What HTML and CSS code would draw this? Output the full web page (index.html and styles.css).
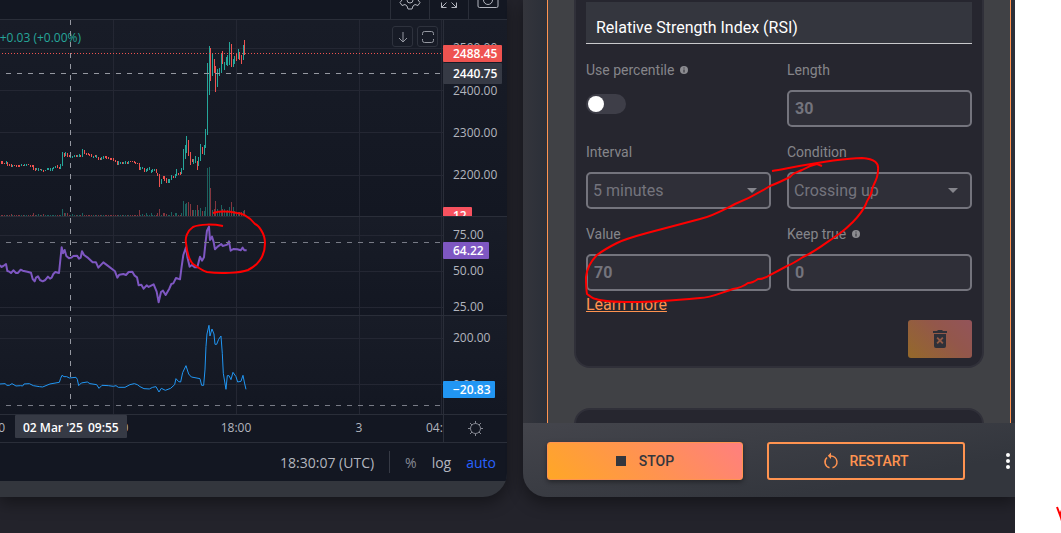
FILE: index.html
```html
<!DOCTYPE html>
<html lang="en">
<head>
    <meta charset="UTF-8">
    <title>Trading Bot</title>
    <link rel="stylesheet" href="styles.css">
</head>
<body>
    <div class="app">
        <section class="chart-panel">
            <div class="chart-toolbar">
                <button class="tool-btn" aria-label="Chart settings">
                    <svg width="28" height="28" viewBox="-14 -14 28 28"><path d="M-2-10h4l1 3 2 1 3-1.500 2 3-2 2.500v2l2 2.500-2 3-3-1-2 1.500-1 3h-4l-1-3-2-1.500-3 1-2-3 2-2.500v-2l-2-2.500 2-3 3 1.500 2-1z"/><circle r="3"/></svg>
                </button>
                <button class="tool-btn" aria-label="Full screen">
                    <svg width="28" height="28" viewBox="-14 -14 28 28"><path d="M-7.500 2.500v5h5M-7.500 7.500l5-5M7.500 2.500v5h-5M7.500 7.500l-5-5M-7.500-2.500v-5h5M7.500-2.500v-5h-5"/></svg>
                </button>
                <button class="tool-btn" aria-label="Take a snapshot">
                    <svg width="28" height="28" viewBox="-14 -14 28 28"><path d="M-10-5q0-2 2-2h3l2-2h6l2 2h3q2 0 2 2v11q0 1.500-1.500 1.500h-17q-1.500 0-1.500-1.500z"/><circle r="4.500"/></svg>
                </button>
            </div>

            <div class="chart-area">
                <svg class="chart" viewBox="0 20 507 423">
                    <defs>
                        <linearGradient id="pane" x1="0" y1="0" x2="0" y2="1">
                            <stop offset="0" stop-color="#181c27"/>
                            <stop offset="1" stop-color="#131722"/>
                        </linearGradient>
                        <clipPath id="plot"><rect x="0" y="20" width="443" height="422"/></clipPath>
                        <clipPath id="price-pane"><rect x="0" y="20" width="507" height="196"/></clipPath>
                    </defs>
                    <rect fill="url(#pane)" x="0" y="20" width="507" height="196"/>
                    <rect fill="url(#pane)" x="0" y="217" width="507" height="98"/>
                    <rect fill="url(#pane)" x="0" y="316" width="507" height="98"/>

                    <path class="grid" d="M0 48.500H443M0 90.500H443M0 132.500H443M0 175.500H443M0 235.500H443M0 271.500H443M0 307.500H443M0 338.500H443M0 384.500H443M113.500 20V414M236.500 20V414M359.500 20V414M441.500 20V414"/>

                    <text class="legend" x="81" y="42" text-anchor="end">+0.03 (+0.00%)</text>

                    <path id="vol-up" class="vol-up"/>
                    <path id="vol-down" class="vol-down"/>
                    <path id="candle-up" class="candle-up"/>
                    <path id="candle-down" class="candle-down"/>

                    <!-- rsi -->
                    <polyline class="rsi" transform="translate(0 210) scale(.3333)" points="0,165 4,171 10,168 18,162 22,183 28,185 33,189 40,181 48,189 54,189 62,179 68,182 82,185 93,188 98,207 104,214 108,203 114,199 120,210 128,214 136,210 144,200 150,206 155,203 160,192 166,186 177,189 181,150 185,112 189,130 194,120 199,138 207,145 214,143 220,138 231,137 237,146 242,143 246,124 252,135 262,142 278,157 288,157 295,173 310,157 322,166 345,184 352,203 358,194 370,192 378,195 386,186 397,185 404,197 411,202 416,226 424,224 431,236 440,226 446,231 461,223 470,245 476,277 483,246 489,242 497,255 508,236 514,222 520,220 528,204 540,208 545,170 550,135 558,112 562,140 569,170 576,165 584,172 592,172 600,140 606,152 612,142 617,95 621,62 627,50 630,90 636,80 641,96 645,118 653,110 664,102 668,108 682,104 687,94 692,122 700,117 712,118 722,121 728,113 733,121 740,121"/>
                    <!-- cci -->
                    <polyline class="cci" transform="translate(0 210) scale(.3333)" points="0,522 16,521 20,526 28,526 36,521 48,528 62,527 68,528 72,522 88,521 100,527 118,530 128,531 150,522 178,517 182,505 186,496 192,500 200,500 208,504 228,502 232,508 236,527 244,519 262,516 270,521 290,524 297,535 306,526 325,527 340,529 348,527 355,532 375,532 390,524 403,521 412,524 420,530 432,536 448,537 458,532 468,530 477,546 484,535 496,541 512,535 524,524 528,506 536,515 542,516 548,488 558,467 566,492 574,501 600,506 605,526 611,526 615,480 618,410 621,372 627,346 630,378 636,357 642,372 645,403 650,403 656,388 663,378 667,430 670,490 678,538 682,497 687,497 693,509 699,487 708,500 713,516 723,514 729,496 733,516 738,538"/>

                    <path class="price-line" d="M2 53.500H443"/>
                    <path class="crosshair" d="M6 73.500H441M70.500 20V409"/>
                    <path class="crosshair level" d="M6 242.500H441M6 405.500H441"/>

                    <path class="divider" d="M0 216.500H507M0 315.500H507M0 414.500H507M0 442.500H507M443.500 20V442"/>

                    <!-- price scale -->
                    <g class="scale">
                        <text x="453" y="52">2500.00</text>
                        <text x="453" y="95">2400.00</text>
                        <text x="453" y="137">2300.00</text>
                        <text x="453" y="179">2200.00</text>
                        <text x="453" y="239">75.00</text>
                        <text x="453" y="275">50.00</text>
                        <text x="453" y="311">25.00</text>
                        <text x="453" y="342">200.00</text>
                        <text x="453" y="389">0.00</text>
                    </g>
                    <g class="tags">
                        <rect fill="#ef5350" x="443" y="45" width="59" height="17" rx="1"/>
                        <text x="453" y="58">2488.45</text>
                        <rect fill="#363a45" x="443" y="63" width="59" height="21" rx="1"/>
                        <text x="453" y="78">2440.75</text>
                        <g clip-path="url(#price-pane)">
                            <rect fill="#f7525f" x="443" y="207" width="29" height="17" rx="1"/>
                            <text x="453" y="220">12</text>
                        </g>
                        <rect fill="#7e57c2" x="443" y="242" width="46" height="17" rx="1"/>
                        <text x="453" y="255">64.22</text>
                        <rect fill="#2196f3" x="443" y="381" width="52" height="17" rx="1"/>
                        <text x="453" y="394">−20.83</text>
                    </g>

                    <!-- time scale -->
                    <g class="scale" clip-path="url(#plot)">
                        <text x="5" y="432" text-anchor="end">12:00</text>
                        <text x="113" y="432" text-anchor="middle">06:00</text>
                        <text x="236" y="432" text-anchor="middle">18:00</text>
                        <text x="359" y="432" text-anchor="middle">3</text>
                        <text x="426" y="432">04:00</text>
                    </g>
                    <g class="tags">
                        <rect fill="#363a45" x="15" y="415" width="112" height="23" rx="1"/>
                        <text x="23" y="432">02 Mar '25</text>
                        <text x="88" y="432">09:55</text>
                    </g>
                    <g class="sun" transform="translate(475.500 428.500)">
                        <circle r="5"/>
                        <path d="M0-5v-2.500M0 5v2.500M-5 0h-2.500M5 0h2.500M-3.500-3.500l-2-2M3.500-3.500l2-2M-3.500 3.500l-2 2M3.500 3.500l2 2"/>
                    </g>
                </svg>
                <div class="pane-buttons">
                    <button class="pane-btn" aria-label="Move pane down">
                        <svg width="18" height="18" viewBox="0 0 18 18"><path d="M9 4v10M5 10l4 4 4-4"/></svg>
                    </button>
                    <button class="pane-btn" aria-label="Maximize pane">
                        <svg width="18" height="18" viewBox="0 0 18 18"><path d="M3.500 7V5.500q0-2 2-2H7M11 3.500h1.500q2 0 2 2V7M14.500 11v1.500q0 2-2 2H11M7 14.500H5.500q-2 0-2-2V11M7 3.500h4M7 14.500h4"/></svg>
                    </button>
                </div>
            </div>

            <div class="chart-footer">
                <button class="clock">18:30:07 (UTC)</button>
                <span class="separator"></span>
                <button class="percent">%</button>
                <button>log</button>
                <button class="active">auto</button>
            </div>
        </section>

        <section class="bot-panel">
            <div class="settings">
                <div class="scroll-area">
                    <form class="card">
                        <div class="card-title">Relative Strength Index (RSI)</div>
                        <div class="fields">
                            <div class="field">
                                <label for="percentile">Use percentile
                                    <svg class="info" width="10" height="10" viewBox="0 0 10 10"><circle cx="5" cy="5" r="4"/><path d="M5 2.500v1M5 4.500v3"/></svg>
                                </label>
                                <input class="switch" type="checkbox" id="percentile">
                            </div>
                            <div class="field">
                                <label for="length">Length</label>
                                <input class="box" type="text" id="length" value="30">
                            </div>
                            <div class="field">
                                <label for="interval">Interval</label>
                                <select class="box" id="interval"><option>5 minutes</option></select>
                            </div>
                            <div class="field">
                                <label for="condition">Condition</label>
                                <select class="box" id="condition"><option>Crossing up</option></select>
                            </div>
                            <div class="field">
                                <label for="value">Value</label>
                                <input class="box" type="text" id="value" value="70">
                            </div>
                            <div class="field">
                                <label for="keep">Keep true
                                    <svg class="info" width="10" height="10" viewBox="0 0 10 10"><circle cx="5" cy="5" r="4"/><path d="M5 2.500v1M5 4.500v3"/></svg>
                                </label>
                                <input class="box" type="text" id="keep" value="0">
                            </div>
                        </div>
                        <a class="learn-more" href="#">Learn more</a>
                        <button class="delete-btn" type="button" aria-label="Delete">
                            <svg width="16" height="20" viewBox="0 0 16 20"><path fill-rule="evenodd" d="M1 2h4l1-1h4l1 1h4v2H1zM2 5h12v12q0 2-2 2H4q-2 0-2-2zM5.800 8L4.500 9.300 6.700 11.500 4.500 13.700 5.800 15 8 12.800 10.200 15l1.300-1.300L9.300 11.500l2.200-2.200L10.200 8 8 10.200z"/></svg>
                        </button>
                    </form>
                    <div class="card next"></div>
                </div>
            </div>
            <div class="actions">
                <button class="stop-btn"><span class="square"></span>STOP</button>
                <button class="restart-btn">
                    <svg width="16" height="18" viewBox="0 0 16 18"><path d="M4 5.500A6 6 0 0 0 6.500 15.800M9.500 15.800A6 6 0 0 0 8 4"/><path class="head" d="M8 .5v6.500L4.800 3.800z"/></svg>
                    RESTART
                </button>
                <button class="more-btn" aria-label="More">
                    <svg width="6" height="16" viewBox="0 0 6 16"><circle cx="3" cy="2" r="2"/><circle cx="3" cy="8" r="2"/><circle cx="3" cy="14" r="2"/></svg>
                </button>
            </div>
        </section>
    </div>

    <!-- red pen marks -->
    <svg class="marks" width="1061" height="533" viewBox="0 0 1061 533">
        <path d="M223 226C213 224 200 224 193 227C187 231 185 238 186 243C187 253 189 260 193 264C200 269 203 271 207 272C220 274 240 273 248 270C258 265 265 257 265 243C265 233 258 225 255 224C248 215 240 213 237 213C227 211 220 211 213 213"/>
        <path d="M772 171C800 166 838 158 862 158C875 159 879 163 878 170C878 181 872 185 872 190C871 197 867 199 866 204C860 217 846 229 839 234C827 242 815 252 803 257C797 261 792 264 787 266L770 275C766 278 762 279 758 279C754 282 750 283 748 283C744 286 739 288 733 289C718 294 710 298 700 298C678 300 656 302 633 302C617 302 604 302 596 299C593 299 590 296 587 294C586 288 586 283 586 277C587 267 591 261 597 255C605 249 611 246 617 243C625 239 636 236 647 233L700 219C713 216 725 209 735 204C750 198 762 191 770 186C778 183 784 180 790 177C794 172 798 172 802 170C807 167 812 165 817 164L822 166"/>
        <path d="M1057 507L1060 515L1062 510M1060 514L1062 521"/>
    </svg>

    <script>
        // [x, high, low]
        const up = [
            [6,161,164],[12,165,167],[21,164,166],[24,164,166],[26,164,166],[36,168,170],[38,168,171],[41,169,171],
            [45,170,171],[47,168,170],[48,168,170],[50,168,171],[52,168,171],[53,167,169],[55,166,168],[60,164,169],
            [62,152,166],[65,152,156],[70,156,158],[72,156,158],[74,155,157],[77,155,157],[79,154,157],[82,149,157],
            [93,156,158],[96,155,158],[101,157,160],[103,156,159],[118,161,165],[120,162,164],[123,162,164],[125,161,164],
            [128,161,164],[140,167,170],[142,167,169],[146,169,172],[147,168,171],[149,167,170],[151,170,173],[152,169,172],
            [154,169,171],[161,179,184],[168,179,183],[169,179,183],[171,175,180],[175,174,178],[176,169,176],[181,168,174],
            [183,149,170],[185,145,159],[186,136,153],[193,159,164],[195,156,163],[198,157,166],[200,144,161],[204,145,155],
            [205,129,148],[207,63,135],[209,46,95],[212,53,76],[217,69,87],[219,68,76],[221,53,73],[224,62,70],
            [226,57,65],[227,55,66],[229,42,65],[233,59,67],[234,56,64],[238,49,59],[243,45,60]
        ];
        const down = [
            [1,161,164],[2,161,164],[4,163,164],[7,162,166],[9,164,166],[11,164,167],[14,165,166],[16,165,167],
            [18,165,167],[19,165,167],[23,165,166],[28,164,165],[30,165,167],[32,165,167],[33,165,170],[35,168,171],
            [40,169,170],[43,170,172],[57,165,168],[59,167,169],[64,153,157],[67,153,157],[69,155,157],[76,155,157],
            [80,155,157],[84,150,154],[86,153,155],[88,153,155],[89,154,156],[91,154,157],[95,155,157],[98,157,160],
            [100,158,160],[105,156,158],[106,156,159],[108,157,159],[110,158,160],[111,158,160],[113,158,161],[115,160,162],
            [117,161,165],[122,162,164],[127,162,164],[130,161,162],[132,161,162],[134,161,163],[135,162,164],[137,163,164],
            [139,163,170],[144,168,172],[156,169,173],[157,173,176],[159,174,187],[163,176,179],[164,176,181],[166,178,183],
            [173,176,178],[178,173,175],[180,172,175],[188,140,156],[190,152,165],[192,159,162],[197,161,170],[202,147,154],
            [210,48,81],[214,59,73],[215,66,92],[222,51,64],[231,44,67],[236,53,61],[239,52,60],[241,55,64],[244,40,55]
        ];
        const volume = {
            11: 2, 33: 3, 38: 2, 43: 2, 62: 7, 64: 3, 65: 3, 67: 3, 72: 2, 82: 3, 139: 6, 142: 2, 146: 3, 151: 3, 157: 3,
            159: 7, 163: 3, 164: 3, 166: 2, 171: 4, 175: 3, 176: 3, 181: 3, 183: 15, 185: 12, 186: 13, 188: 14, 190: 12,
            192: 6, 193: 6, 195: 6, 197: 11, 198: 6, 200: 8, 202: 5, 204: 5, 205: 9, 207: 48, 209: 49, 210: 28, 212: 6,
            214: 7, 215: 15, 217: 7, 219: 5, 221: 11, 222: 7, 224: 7, 226: 5, 227: 6, 229: 9, 231: 14, 233: 9, 234: 5,
            236: 4, 238: 4, 239: 4, 241: 4, 243: 5, 244: 6
        };

        function draw(name, candles) {
            const bars = candles.map(([x, high, low]) => `M${x + 0.5} ${high}V${low}`);
            const volumes = candles.map(([x]) => `M${x + 0.5} 216v-${volume[x] || 1}`);
            document.getElementById('candle-' + name).setAttribute('d', bars.join(''));
            document.getElementById('vol-' + name).setAttribute('d', volumes.join(''));
        }

        draw('up', up);
        draw('down', down);
    </script>
</body>
</html>
```
FILE: styles.css
```css
* {
    box-sizing: border-box;
}
body {
    margin: 0;
    padding-right: 46px;
    background: #fff;
    font-family: Roboto, sans-serif;
    overflow: hidden;
}
button {
    padding: 0;
    border: none;
    background: none;
    font: inherit;
    color: inherit;
    cursor: pointer;
}
.app {
    display: flex;
    gap: 16px;
    align-items: flex-start;
    min-height: 100vh;
    padding-bottom: 36px;
    background: #23232b;
    overflow: hidden;
}

/* Chart */
.chart-panel {
    flex: 1;
    padding-bottom: 16px;
    background: #33363d;
    border-radius: 0 0 24px 0;
    box-shadow: 0 6px 16px rgba(0, 0, 0, 0.4);
    font-family: 'Trebuchet MS', 'Open Sans', sans-serif;
    overflow: hidden;
}
.chart-toolbar {
    display: flex;
    justify-content: flex-end;
    align-items: flex-end;
    height: 20px;
    background: #131722;
    border-bottom: 1px solid #2a2e39;
    overflow: hidden;
}
.tool-btn {
    display: flex;
    justify-content: center;
    align-items: center;
    width: 39px;
    height: 38px;
    border-left: 1px solid #2a2e39;
}
.tool-btn svg,
.pane-btn svg {
    fill: none;
    stroke: #b2b5be;
}
.chart-area {
    position: relative;
}
.chart {
    display: block;
    width: 100%;
    background: #131722;
    font-size: 12px;
}
.grid {
    stroke: #242733;
}
.divider {
    stroke: #2a2e39;
}
.legend {
    fill: #26a69a;
}
.candle-up {
    stroke: #26a69a;
}
.candle-down {
    stroke: #ef5350;
}
.vol-up {
    stroke: #1c625f;
}
.vol-down {
    stroke: #83363f;
}
.rsi,
.cci {
    fill: none;
    stroke: #7e57c2;
    stroke-width: 2px;
    stroke-linejoin: round;
    vector-effect: non-scaling-stroke;
}
.cci {
    stroke: #2196f3;
    stroke-width: 1px;
}
.price-line {
    stroke: #ef5350;
    stroke-dasharray: 1 2;
}
.crosshair {
    stroke: #9598a1;
    stroke-dasharray: 5 6;
}
.crosshair.level {
    stroke: #787b86;
}
.scale {
    fill: #b2b5be;
}
.tags {
    fill: #fff;
    font-weight: 600;
}
.sun {
    fill: none;
    stroke: #868993;
}
.pane-buttons {
    position: absolute;
    top: 6px;
    right: 69px;
    display: flex;
    gap: 4px;
}
.pane-btn {
    display: flex;
    justify-content: center;
    align-items: center;
    width: 21px;
    height: 21px;
    border: 1px solid #2e323d;
    border-radius: 3px;
    background: #171b26;
}
.pane-btn svg {
    stroke: #9598a1;
}
.chart-footer {
    display: flex;
    justify-content: flex-end;
    align-items: center;
    gap: 15px;
    height: 38px;
    padding-right: 11px;
    background: #131722;
    color: #b2b5be;
    font-size: 14px;
}
.separator {
    width: 1px;
    height: 22px;
    background: #363a45;
}
.percent {
    color: #868993;
}
.active {
    color: #2962ff;
}

/* Bot settings */
.bot-panel {
    width: 492px;
    border-radius: 0 0 0 24px;
    box-shadow: 0 6px 16px rgba(0, 0, 0, 0.4);
    overflow: hidden;
}
.settings {
    height: 423px;
    padding: 0 4px 0 24px;
    background: linear-gradient(to right, #34353c, #2b2f38 24px);
    overflow: hidden;
}
.scroll-area {
    padding: 0 26px;
    border: solid #ff9350;
    border-width: 0 1px;
    background: #404145;
}
.card {
    display: flex;
    flex-direction: column;
    padding: 2px 10px 8px;
    border: 2px solid #303039;
    border-top: none;
    border-radius: 0 0 16px 16px;
    background: #26262f;
}
.card.next {
    height: 60px;
    margin-top: 40px;
    border-top: 2px solid #303039;
    border-radius: 16px 16px 0 0;
}
.card-title {
    height: 42px;
    padding: 5px 10px 0;
    border-bottom: 1px solid #c9c9cc;
    background: #34363e;
    color: #fff;
    font-size: 16px;
    line-height: 42px;
}
.fields {
    display: grid;
    grid-template-columns: 1fr 1fr;
    gap: 15px 16px;
    padding: 16px 0 2px;
}
.field {
    display: flex;
    flex-direction: column;
    gap: 10px;
}
.field label {
    display: flex;
    align-items: center;
    gap: 5px;
    color: #85858a;
    font-size: 14px;
    line-height: 20px;
}
.info circle {
    fill: #8c8c91;
}
.info path {
    stroke: #26262f;
}
.box {
    width: 100%;
    height: 37px;
    padding: 0 6px;
    border: 2px solid #74747d;
    border-radius: 5px;
    background: #2f2f38;
    color: #74747d;
    font-family: inherit;
    font-size: 16px;
    font-weight: bold;
}
select.box {
    appearance: none;
    padding: 0 5px;
    background: #2f2f38 url("data:image/svg+xml,%3Csvg xmlns='http://www.w3.org/2000/svg' width='10' height='5'%3E%3Cpath d='M0 0h10L5 5z' fill='%2385858c'/%3E%3C/svg%3E") no-repeat right 12px center;
    font-weight: normal;
}
.switch {
    appearance: none;
    display: flex;
    align-items: center;
    width: 40px;
    height: 20px;
    margin: 4px 0;
    padding: 2px;
    border-radius: 10px;
    background: #3e3e48;
}
.switch::before {
    content: '';
    width: 16px;
    height: 16px;
    border-radius: 50%;
    background: #fff;
}
.switch:checked {
    justify-content: flex-end;
}
.learn-more {
    align-self: flex-start;
    color: #ff9350;
    font-size: 16px;
    line-height: 24px;
}
.delete-btn {
    display: flex;
    justify-content: center;
    align-items: center;
    align-self: flex-end;
    width: 64px;
    height: 38px;
    margin-top: 3px;
    border-radius: 3px;
    background: linear-gradient(45deg, #94692a, #93574b 60%, #93545a);
}
.delete-btn svg {
    fill: #2f3038;
}

/* Bottom bar */
.actions {
    display: flex;
    align-items: center;
    gap: 24px;
    height: 74px;
    padding: 2px 4px 0 24px;
    background: linear-gradient(170deg, #44454c, #33363d 75%);
}
.stop-btn,
.restart-btn {
    display: flex;
    justify-content: center;
    align-items: center;
    flex: 1;
    height: 38px;
    border-radius: 3px;
    font-size: 14px;
    font-weight: 500;
}
.stop-btn {
    gap: 13px;
    border: 1px solid #ff9350;
    background: linear-gradient(45deg, #ffa726, #ff9350 50%, #ff7f7f);
    box-shadow: 0 2px 5px rgba(0, 0, 0, 0.4);
    color: #33363d;
}
.square {
    width: 10px;
    height: 10px;
    background: #33363d;
}
.restart-btn {
    gap: 10px;
    border: 2px solid #ff9350;
    color: #ff9350;
}
.restart-btn svg {
    fill: none;
    stroke: #ff9350;
    stroke-width: 1.5px;
}
.restart-btn .head {
    fill: #ff9350;
    stroke: none;
}
.more-btn {
    margin-left: 16px;
}
.more-btn svg {
    display: block;
    fill: #fff;
}

/* Pen marks over the page */
.marks {
    position: absolute;
    top: 0;
    left: 0;
    fill: none;
    stroke: #f00;
    stroke-width: 2px;
    pointer-events: none;
}
```
